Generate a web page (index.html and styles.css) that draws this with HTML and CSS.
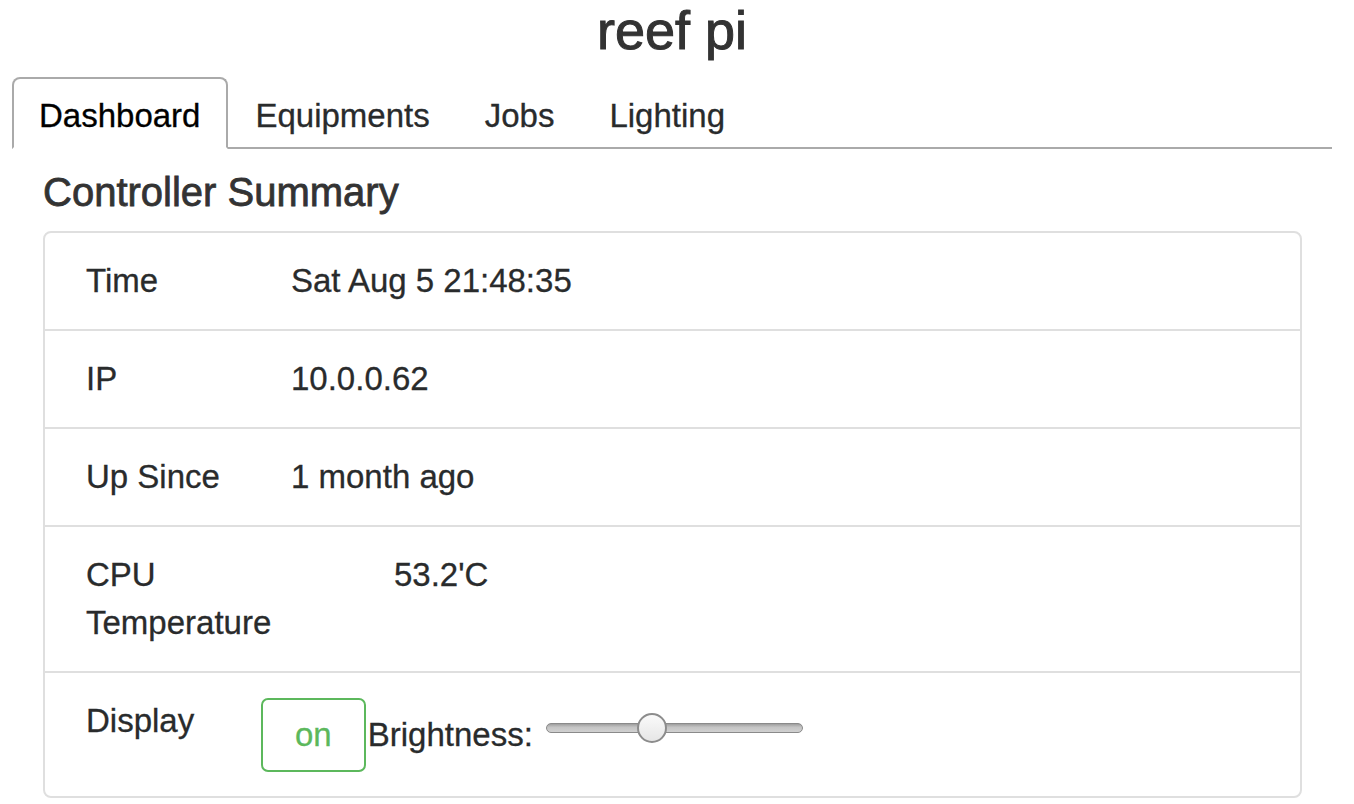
FILE: index.html
```html
<!DOCTYPE html>
<html lang="en">
<head>
<meta charset="utf-8">
<title>reef pi</title>
<link rel="stylesheet" href="styles.css">
</head>
<body>
<div class="container">
  <h1 class="title">reef pi</h1>
  <ul class="tabs">
    <li class="tab tab-active">Dashboard</li>
    <li class="tab">Equipments</li>
    <li class="tab">Jobs</li>
    <li class="tab">Lighting</li>
  </ul>
  <div class="tab-content">
    <h4 class="section-title">Controller Summary</h4>
    <ul class="card">
      <li class="row"><span class="label">Time</span><span class="value">Sat Aug 5 21:48:35</span></li>
      <li class="row"><span class="label">IP</span><span class="value">10.0.0.62</span></li>
      <li class="row"><span class="label">Up Since</span><span class="value">1 month ago</span></li>
      <li class="row"><span class="label">CPU Temperature</span><span class="value value-shift">53.2'C</span></li>
      <li class="row"><span class="label label-short">Display</span><span class="value"><button class="btn-on" type="button">on</button>Brightness:<input class="slider" type="range" min="0" max="100" value="40"></span></li>
    </ul>
  </div>
</div>
</body>
</html>
```

FILE: styles.css
```css
html, body {
  margin: 0;
  padding: 0;
  background: #fff;
}
body {
  font-family: "Liberation Sans", Arial, sans-serif;
  color: #292b2c;
}
.container {
  padding: 0 22px 0 12px;
}
.title {
  margin: 0 0 17px 0;
  font-size: 54px;
  line-height: 60px;
  font-weight: 500;
  text-align: center;
  color: #333;
  -webkit-text-stroke: 1px #333;
}
.tabs {
  list-style: none;
  margin: 0;
  padding: 0;
  display: flex;
  border-bottom: 2px solid #aaa;
}
.tab {
  font-size: 33px;
  line-height: 48px;
  padding: 13px 26px 7px 25px;
  border: 2px solid transparent;
  border-radius: 8px 8px 0 0;
  margin-bottom: -2px;
  color: #292b2c;
  -webkit-text-stroke: 0.3px currentColor;
}
.tab-active {
  border-color: #aaa #aaa #fff #aaa;
  color: #000;
  background: #fff;
}
.tab-content {
  padding: 20px 30px 0 31px;
}
.section-title {
  margin: 0 0 16px 0;
  font-size: 40px;
  line-height: 46px;
  font-weight: 500;
  color: #333;
  -webkit-text-stroke: 0.8px #333;
}
.card {
  list-style: none;
  margin: 0;
  padding: 0;
  border: 2px solid #dfdfdf;
  border-radius: 8px;
}
.row {
  display: flex;
  align-items: flex-start;
  padding: 24px 41px;
  font-size: 33px;
  line-height: 48px;
  border-top: 2px solid #dfdfdf;
  -webkit-text-stroke: 0.3px currentColor;
}
.row:first-child {
  border-top: 0;
}
.label {
  width: 205px;
  flex: none;
}
.label-short {
  width: 175px;
}
.value-shift {
  padding-left: 103px;
}
.btn-on {
  font-family: inherit;
  font-size: 33px;
  line-height: 48px;
  padding: 11px 32px;
  border: 2px solid #5cb85c;
  border-radius: 7px;
  color: #5cb85c;
  background: #fff;
  margin: 1px 2px 0 0;
  vertical-align: baseline;
  -webkit-text-stroke: 0.3px currentColor;
}
.slider {
  -webkit-appearance: none;
  appearance: none;
  width: 257px;
  height: 30px;
  margin: 0 0 0 13px;
  padding: 0;
  background: transparent;
  vertical-align: 3px;
}
.slider::-webkit-slider-runnable-track {
  height: 10px;
  border-radius: 5px;
  border: 1px solid #8a8a8a;
  box-sizing: border-box;
  background: linear-gradient(#9e9e9e, #c4c4c4 40%, #d0d0d0);
}
.slider::-webkit-slider-thumb {
  -webkit-appearance: none;
  appearance: none;
  width: 30px;
  height: 30px;
  margin-top: -11px;
  border-radius: 50%;
  border: 2px solid #8c8c8c;
  box-sizing: border-box;
  background: linear-gradient(#fafafa, #e6e6e6);
}
```
